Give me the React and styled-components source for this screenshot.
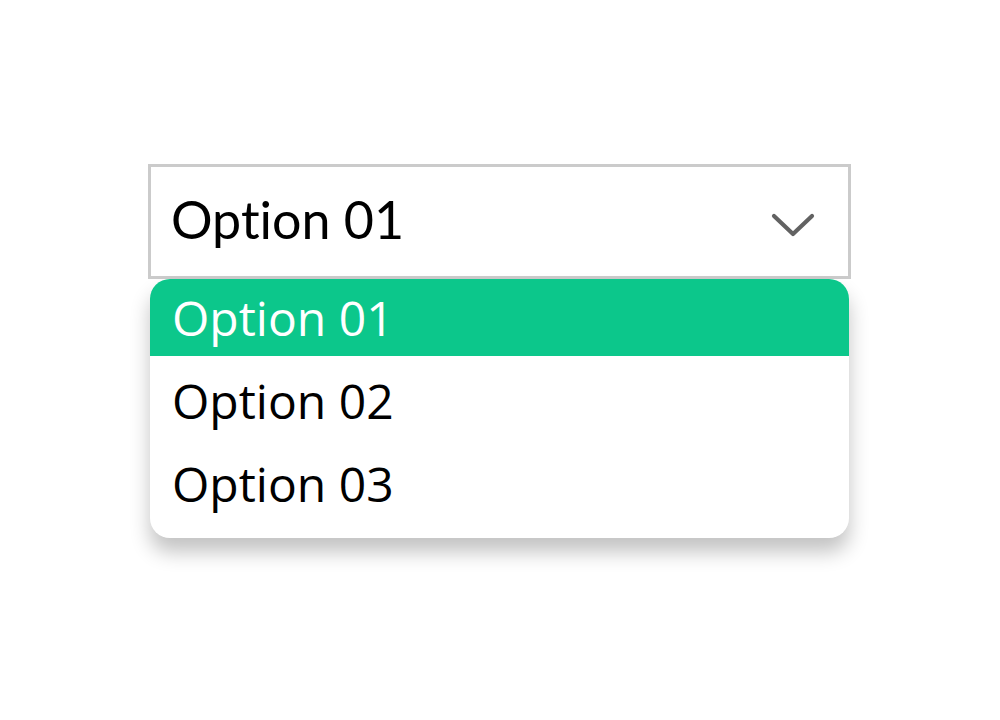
import React from 'react';
import styled, { createGlobalStyle } from 'styled-components';

const GlobalStyle = createGlobalStyle`
	body {
		margin: 0;
		background: #ffffff;
		font-family: "Open Sans", "Liberation Sans", sans-serif;
	}
`;

const Page = styled.div`
	width: 1000px;
	height: 720px;
	box-sizing: border-box;
	padding: 164px 0 0 148px;
`;

const SelectWrapper = styled.div`
	display: flex;
	flex-direction: column;
	width: 703px;
`;

const SelectBox = styled.div`
	display: flex;
	align-items: center;
	justify-content: space-between;
	box-sizing: border-box;
	height: 115px;
	border: 3px solid #cbcbcb;
	padding: 0 33px 0 20px;
	font-family: "Lato", sans-serif;
	font-size: 52px;
	font-variant-ligatures: none;
	color: #000;
`;

const Label = styled.span`
	margin-top: -6px;
`;

const Chevron = styled.svg`
	width: 44px;
	height: 26px;
	margin-top: 6px;
`;

const Menu = styled.ul`
	list-style: none;
	margin: 0 2px;
	padding: 0 0 16px;
	background: #fff;
	border-radius: 20px;
	overflow: hidden;
	box-shadow: 0 14px 20px rgba(0, 0, 0, 0.24);
`;

const Item = styled.li`
	display: flex;
	align-items: center;
	box-sizing: border-box;
	height: ${({ first }) => (first ? '77px' : '83px')};
	padding: ${({ first }) => (first ? '0 22px' : '6px 22px 0')};
	font-family: "Open Sans", sans-serif;
	font-size: 48px;
	color: ${({ active }) => (active ? '#fff' : '#000')};
	background: ${({ active }) => (active ? '#0cc78b' : 'transparent')};
`;

const options = ['Option 01', 'Option 02', 'Option 03'];

const App = () => (
	<>
		<GlobalStyle />
		<Page>
			<SelectWrapper>
				<SelectBox>
					<Label>Option 01</Label>
					<Chevron viewBox="0 0 44 26" fill="none">
						<path d="M3 4 L22 22 L41 4" stroke="#626262" strokeWidth="4.2" strokeLinecap="round" strokeLinejoin="round" />
					</Chevron>
				</SelectBox>
				<Menu>
					{options.map((opt, i) => (
						<Item key={opt} first={i === 0} active={i === 0}>{opt}</Item>
					))}
				</Menu>
			</SelectWrapper>
		</Page>
	</>
);

export default App;
